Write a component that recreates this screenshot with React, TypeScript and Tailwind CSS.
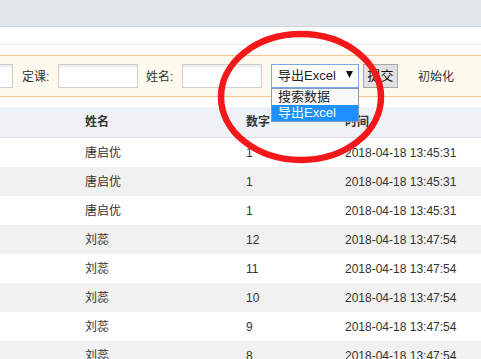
import React from 'react';

const rows = [
  { name: '唐启优', num: '1', time: '2018-04-18 13:45:31' },
  { name: '唐启优', num: '1', time: '2018-04-18 13:45:31' },
  { name: '唐启优', num: '1', time: '2018-04-18 13:45:31' },
  { name: '刘蕊', num: '12', time: '2018-04-18 13:47:54' },
  { name: '刘蕊', num: '11', time: '2018-04-18 13:47:54' },
  { name: '刘蕊', num: '10', time: '2018-04-18 13:47:54' },
  { name: '刘蕊', num: '9', time: '2018-04-18 13:47:54' },
  { name: '刘蕊', num: '8', time: '2018-04-18 13:47:54' },
];

function TextInput({ className = '' }: { className?: string }) {
  return (
    <div
      className={`h-[24px] w-[80px] shrink-0 border border-[#cfcfcf] bg-white shadow-[inset_0_2px_2px_rgba(0,0,0,0.08)] ${className}`}
    />
  );
}

export default function App() {
  return (
    <div className="relative h-[359px] w-[481px] overflow-hidden bg-white font-['Liberation_Sans','Noto_Sans_CJK_SC',sans-serif] text-[12px] text-[#333]">
      {/* top bar */}
      <div className="h-[27px] border-b border-[#cdd4d8] bg-[#e3e8eb]" />
      <div className="h-[18px] border-b border-[#ededed]" />
      <div className="h-[10px]" />

      {/* toolbar */}
      <div className="flex h-[42px] items-start border-y border-[#fcc68a] bg-[#fffaee] pt-[8px]">
        <TextInput className="ml-[-67px]" />
        <span className="ml-[9px] mt-[4px] w-[36px] shrink-0">定课:</span>
        <TextInput />
        <span className="ml-[8px] mt-[4px] w-[36px] shrink-0">姓名:</span>
        <TextInput />

        <div className="relative ml-[9px] shrink-0">
          <div className="flex h-[24px] w-[88px] items-center justify-between border border-[#7ea6df] bg-white pl-[6px] pr-[5px] text-[13px] text-[#222]">
            <span>导出Excel</span>
            <svg width="7" height="7" viewBox="0 0 7 7" className="mb-[3px]">
              <path d="M0 0 H7 L3.5 7 Z" fill="#111" />
            </svg>
          </div>
          {/* open list */}
          <div className="absolute left-0 top-[24px] z-10 w-[88px] border border-[#7f9db9] bg-white text-[13px] leading-[16px]">
            <div className="bg-[#f9f9f9] pl-[6px] text-[#222]">搜索数据</div>
            <div className="bg-[#1e90ff] pl-[6px] text-white">导出Excel</div>
          </div>
        </div>

        <div className="ml-[4px] flex h-[24px] w-[35px] shrink-0 items-center justify-center border border-[#a7a7a7] bg-[#e1e1e1] text-[13px] text-[#111]">
          提交
        </div>
        <span className="ml-[20px] mt-[4px] shrink-0">初始化</span>
      </div>

      <div className="h-[10px]" />

      {/* table */}
      <div className="grid h-[31px] grid-cols-[85px_161px_99px_1fr] items-center border-b border-[#d9dfe4] bg-[#eef2f6] font-bold text-[#333]">
        <div />
        <div>姓名</div>
        <div>数字</div>
        <div>时间</div>
      </div>
      {rows.map((r, i) => (
        <div
          key={i}
          className={`grid h-[29px] grid-cols-[85px_161px_99px_1fr] items-center ${i % 2 === 1 ? 'bg-[#f1f1f1]' : 'bg-white'}`}
        >
          <div />
          <div>{r.name}</div>
          <div>{r.num}</div>
          <div>{r.time}</div>
        </div>
      ))}

      {/* red highlight mark */}
      <svg className="pointer-events-none absolute left-0 top-0 z-20" width="481" height="359">
        <ellipse cx="301" cy="97" rx="80" ry="63" fill="none" stroke="#f5181a" strokeWidth="6.5" />
      </svg>
    </div>
  );
}
